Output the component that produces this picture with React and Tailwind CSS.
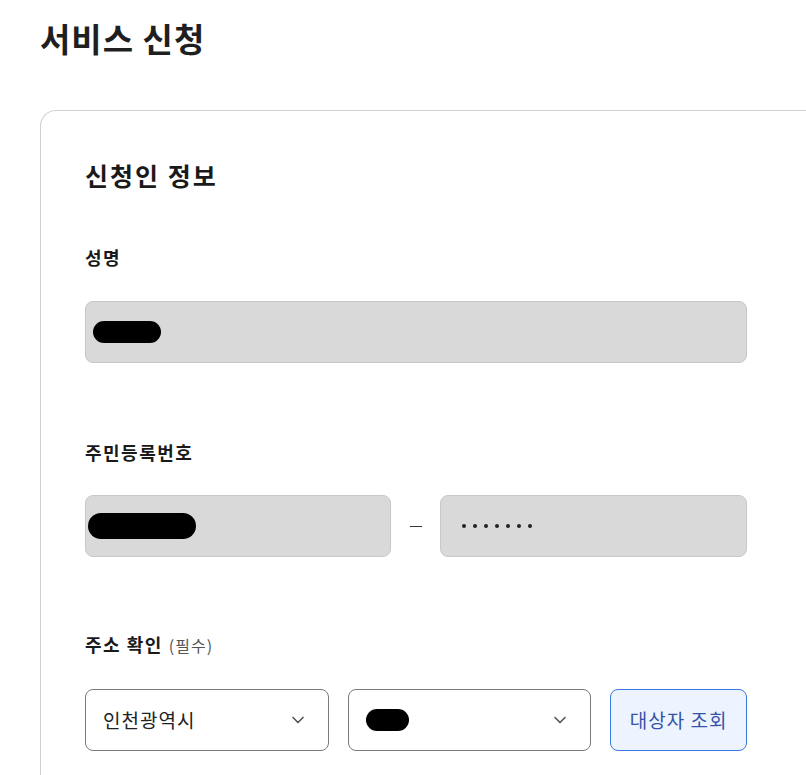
import { ChevronDown } from "lucide-react";

const font = { fontFamily: '"Noto Sans CJK KR", "Noto Sans", sans-serif' };

function Redact({ className }) {
  return <div className={`rounded-full bg-black ${className}`} />;
}

function Select({ children }) {
  return (
    <div className="flex h-[62px] w-[244px] items-center justify-between rounded-lg border border-[#7a7a7a] bg-white pl-[17px] pr-[20px]">
      <div className="text-[19px] tracking-[1px] text-[#222]">{children}</div>
      <ChevronDown className="h-5 w-5 text-[#555]" strokeWidth={2} />
    </div>
  );
}

export default function App() {
  return (
    <div className="min-h-screen overflow-hidden bg-white pl-10 text-[#1a1a1a]" style={font}>
      <h1 className="pt-[16px] text-[33px] font-bold leading-[44px] tracking-[1px] text-[#1f1f1f]">서비스 신청</h1>

      <div className="mt-[50px] w-[900px] rounded-tl-2xl border-l border-t border-[#cfcfcf] pl-[44px] pt-[48px] pb-10">
        <div className="w-[662px]">
          <h2 className="text-[25px] font-bold leading-8 tracking-[2px]">신청인 정보</h2>

          <div className="mt-[54px] text-[18px] font-bold leading-6 tracking-[1.5px]">성명</div>
          <div className="mt-[32px] flex h-[62px] items-center rounded-lg border border-[#c8c8c8] bg-[#d9d9d9] pl-[7px]">
            <Redact className="h-[22px] w-[68px]" />
          </div>

          <div className="mt-[77px] text-[18px] font-bold leading-6 tracking-[1.5px]">주민등록번호</div>
          <div className="mt-[31px] flex items-center">
            <div className="flex h-[62px] w-[306px] items-center rounded-lg border border-[#c8c8c8] bg-[#d9d9d9] pl-[2px]">
              <Redact className="h-[26px] w-[108px]" />
            </div>
            <div className="flex w-[49px] justify-center">
              <div className="h-px w-[12px] bg-[#333]" />
            </div>
            <div className="flex h-[62px] flex-1 items-center rounded-lg border border-[#c8c8c8] bg-[#d9d9d9] pl-[21px]">
              <div className="flex gap-[7px]">
                {Array.from({ length: 7 }).map((_, i) => (
                  <div key={i} className="h-[4px] w-[4px] rounded-full bg-[#222]" />
                ))}
              </div>
            </div>
          </div>

          <div className="mt-[75px] flex items-baseline gap-[6px] leading-6">
            <span className="text-[18px] font-bold tracking-[1.5px]">주소 확인</span>
            <span className="text-[16px] tracking-[1px] text-[#555]">(필수)</span>
          </div>
          <div className="mt-[32px] flex items-center gap-[19px]">
            <Select>인천광역시</Select>
            <Select>
              <Redact className="h-[22px] w-[43px]" />
            </Select>
            <button className="h-[62px] w-[137px] rounded-lg border border-[#3b78e0] bg-[#edf4ff] text-[19px] tracking-[1px] text-[#3552a8]">
              대상자 조회
            </button>
          </div>
        </div>
      </div>
    </div>
  );
}
